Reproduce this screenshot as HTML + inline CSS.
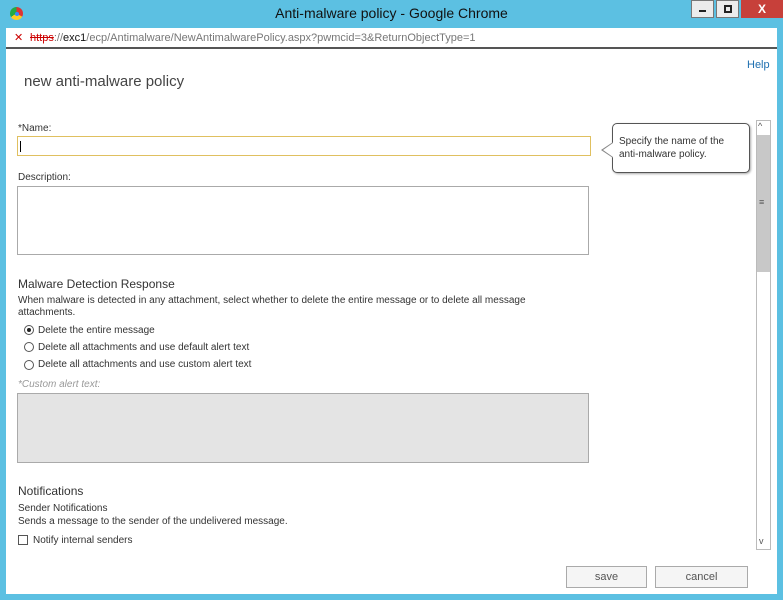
<!DOCTYPE html>
<html><head><meta charset="utf-8"><style>
*{margin:0;padding:0;box-sizing:border-box}
body{width:783px;height:600px;background:#5cc0e2;font-family:"Liberation Sans",sans-serif;position:relative;overflow:hidden;color:#333}
.a{position:absolute}
.title{left:0;top:0;width:783px;height:28px;text-align:center;font-size:14px;line-height:26px;color:#111}
.addr{left:6px;top:28px;width:771px;height:21px;background:#fff;border-bottom:2px solid #555;font-size:11px;line-height:21px;padding-left:24px;color:#777}
.main{left:6px;top:49px;width:771px;height:545px;background:#fff}
.lbl{font-size:10px;color:#333}
.box{border:1px solid #aaa;background:#fff}
.h{font-size:12px;color:#333}
.radio{width:10px;height:10px;border:1px solid #555;border-radius:50%}
.btn{border:1px solid #aaa;background:#f5f5f5;font-size:11px;color:#555;text-align:center;line-height:20px}
</style></head><body>
<div class="a title">Anti-malware policy - Google Chrome</div>
<div class="a" style="left:10px;top:7px;width:13px;height:13px;border-radius:50%;background:conic-gradient(#d33 0 33%,#fc2 0 66%,#2a4 0)"></div>
<div class="a" style="left:15px;top:12px;width:4px;height:4px;border-radius:50%;background:#38f"></div>
<div class="a" style="left:691px;top:0;width:23px;height:18px;background:#ececec;border:1px solid #777"><div style="margin:9px 7px;width:7px;height:2px;background:#222"></div></div>
<div class="a" style="left:716px;top:0;width:23px;height:18px;background:#ececec;border:1px solid #777"><div style="margin:4px 7px;width:8px;height:8px;border:2px solid #222"></div></div>
<div class="a" style="left:741px;top:0;width:42px;height:18px;background:#c7403a;color:#fff;font-size:12px;font-weight:bold;text-align:center;line-height:18px">X</div>
<div class="a addr"><span style="color:#c00;position:absolute;left:8px">✕</span><span style="color:#c00;text-decoration:line-through">https</span>://<span style="color:#111">exc1</span>/ecp/Antimalware/NewAntimalwarePolicy.aspx?pwmcid=3&amp;ReturnObjectType=1</div>
<div class="a main"></div>
<div class="a" style="left:747px;top:59px;font-size:11px;color:#1e6fb0">Help</div>
<div class="a" style="left:24px;top:73px;font-size:15px;color:#444">new anti-malware policy</div>
<div class="a lbl" style="left:18px;top:123px">*Name:</div>
<div class="a box" style="left:17px;top:136px;width:574px;height:20px;border-color:#e0c060"><div style="margin:4px 2px;width:1px;height:11px;background:#000"></div></div>
<div class="a" style="left:612px;top:123px;width:138px;height:50px;border:1px solid #555;border-radius:5px;background:#fff;box-shadow:1px 1px 2px #aaa;font-size:10px;line-height:13px;padding:11px 6px;color:#333">Specify the name of the anti-malware policy.</div>
<div class="a" style="left:601px;top:142px;width:0;height:0;border-top:8px solid transparent;border-bottom:8px solid transparent;border-right:12px solid #888"></div>
<div class="a" style="left:603px;top:143px;width:0;height:0;border-top:7px solid transparent;border-bottom:7px solid transparent;border-right:10px solid #fff"></div>
<div class="a lbl" style="left:18px;top:172px">Description:</div>
<div class="a box" style="left:17px;top:186px;width:572px;height:69px"></div>
<div class="a h" style="left:18px;top:277px">Malware Detection Response</div>
<div class="a lbl" style="left:18px;top:295px;width:560px;line-height:12px">When malware is detected in any attachment, select whether to delete the entire message or to delete all message attachments.</div>
<div class="a radio" style="left:24px;top:325px"><div style="margin:2px;width:4px;height:4px;border-radius:50%;background:#222"></div></div>
<div class="a lbl" style="left:38px;top:325px">Delete the entire message</div>
<div class="a radio" style="left:24px;top:342px"></div>
<div class="a lbl" style="left:38px;top:342px">Delete all attachments and use default alert text</div>
<div class="a radio" style="left:24px;top:360px"></div>
<div class="a lbl" style="left:38px;top:359px">Delete all attachments and use custom alert text</div>
<div class="a lbl" style="left:18px;top:379px;color:#999;font-style:italic">*Custom alert text:</div>
<div class="a box" style="left:17px;top:393px;width:572px;height:70px;background:#e4e4e4"></div>
<div class="a h" style="left:18px;top:484px">Notifications</div>
<div class="a lbl" style="left:18px;top:503px">Sender Notifications</div>
<div class="a lbl" style="left:18px;top:516px">Sends a message to the sender of the undelivered message.</div>
<div class="a" style="left:18px;top:535px;width:10px;height:10px;border:1px solid #555"></div>
<div class="a lbl" style="left:33px;top:535px">Notify internal senders</div>
<div class="a" style="left:756px;top:120px;width:15px;height:430px;border:1px solid #bbb;background:#fff"></div>
<div class="a" style="left:757px;top:135px;width:13px;height:137px;background:#c8c8c8"></div>
<div class="a" style="left:758px;top:121px;font-size:9px;color:#555">^</div>
<div class="a" style="left:759px;top:197px;font-size:9px;color:#555">≡</div>
<div class="a" style="left:759px;top:536px;font-size:9px;color:#555">v</div>
<div class="a btn" style="left:566px;top:566px;width:81px;height:22px">save</div>
<div class="a btn" style="left:655px;top:566px;width:93px;height:22px">cancel</div>
</body></html>
